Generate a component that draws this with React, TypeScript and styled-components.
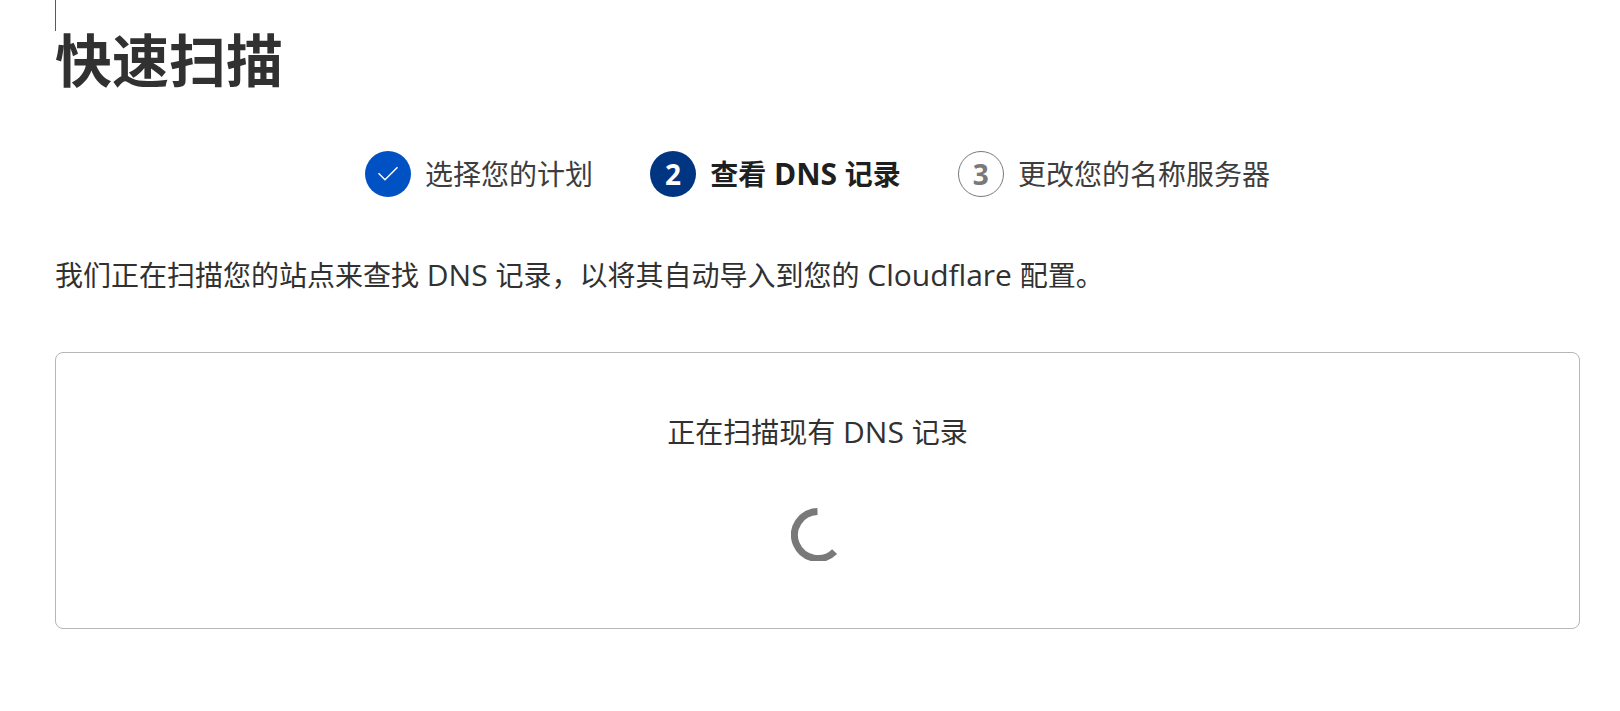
import React from "react";
import styled, { createGlobalStyle, css } from "styled-components";

const GlobalStyle = createGlobalStyle`
  *, *::before, *::after { box-sizing: border-box; }
  body {
    margin: 0;
    background: #fff;
    color: #313131;
    font-family: "Open Sans", "Noto Sans CJK SC", sans-serif;
    font-size: 28px;
    line-height: 42px;
  }
`;

const Page = styled.main`
  padding: 0 40px 40px 55px;
`;

const FocusLine = styled.div`
  width: 1px;
  height: 31px;
  background: #1463e0;
`;

const Title = styled.h1`
  margin: 0;
  font-size: 57px;
  line-height: 58px;
  font-weight: 700;
`;

const Steps = styled.ol`
  display: flex;
  justify-content: center;
  gap: 57px;
  margin: 62px 0 0;
  padding: 0;
  list-style: none;
`;

type StepState = "done" | "current" | "upcoming";

const Step = styled.li<{ $state: StepState }>`
  display: flex;
  align-items: center;
  gap: 14px;
  height: 46px;
  white-space: nowrap;
  color: #3d3d3d;
  ${({ $state }) => $state === "current" && css`
    color: #1d1f20;
    font-weight: 700;
  `}
`;

const markerStyles = {
  done: css`background: #0051c3; color: #fff;`,
  current: css`background: #003681; color: #fff;`,
  upcoming: css`border: 1px solid #797979; color: #797979;`,
};

const Marker = styled.span<{ $state: StepState }>`
  display: flex;
  align-items: center;
  justify-content: center;
  flex: none;
  width: 46px;
  height: 46px;
  border-radius: 50%;
  font-weight: 700;
  ${({ $state }) => markerStyles[$state]}
`;

/* Latin words are set a little larger so their weight balances the Chinese text. */
const Latin = styled.span`
  font-size: 30px;
  line-height: 1;
`;

const Intro = styled.p`
  margin: 57px 0 0;
`;

const Card = styled.section`
  display: flex;
  flex-direction: column;
  align-items: center;
  gap: 55px;
  margin-top: 56px;
  padding: 58px 24px 67px;
  border: 1px solid #b6b6b6;
  border-radius: 8px;
`;

const Status = styled.p`
  margin: 0;
`;

const Check = () => (
  <svg width="22" height="16" viewBox="0 0 22 16" fill="none" stroke="#fff" strokeWidth="1.5" aria-hidden="true">
    <path d="M1.5 7.2 8 13.7 20.5 1.3" />
  </svg>
);

const Spinner = () => (
  <svg width="54" height="53" viewBox="0 0 54 53" fill="none" stroke="#797979" strokeWidth="7" role="img" aria-label="正在加载">
    <path d="M26.5 3.5A23.5 23.5 0 1 0 43.6 43.6" />
  </svg>
);

const steps: { id: string; label: React.ReactNode; state: StepState }[] = [
  { id: "plan", label: "选择您的计划", state: "done" },
  { id: "dns", label: <>查看<Latin> DNS </Latin>记录</>, state: "current" },
  { id: "nameservers", label: "更改您的名称服务器", state: "upcoming" },
];

export default function App() {
  return (
    <>
      <GlobalStyle />
      <Page>
        <FocusLine />
        <Title>快速扫描</Title>
        <Steps>
          {steps.map(({ id, label, state }, index) => (
            <Step key={id} $state={state} aria-current={state === "current" ? "step" : undefined}>
              <Marker $state={state}>{state === "done" ? <Check /> : index + 1}</Marker>
              <span>{label}</span>
            </Step>
          ))}
        </Steps>
        <Intro>
          我们正在扫描您的站点来查找<Latin> DNS </Latin>记录，以将其自动导入到您的<Latin> Cloudflare </Latin>配置。
        </Intro>
        <Card>
          <Status>正在扫描现有<Latin> DNS </Latin>记录</Status>
          <Spinner />
        </Card>
      </Page>
    </>
  );
}
